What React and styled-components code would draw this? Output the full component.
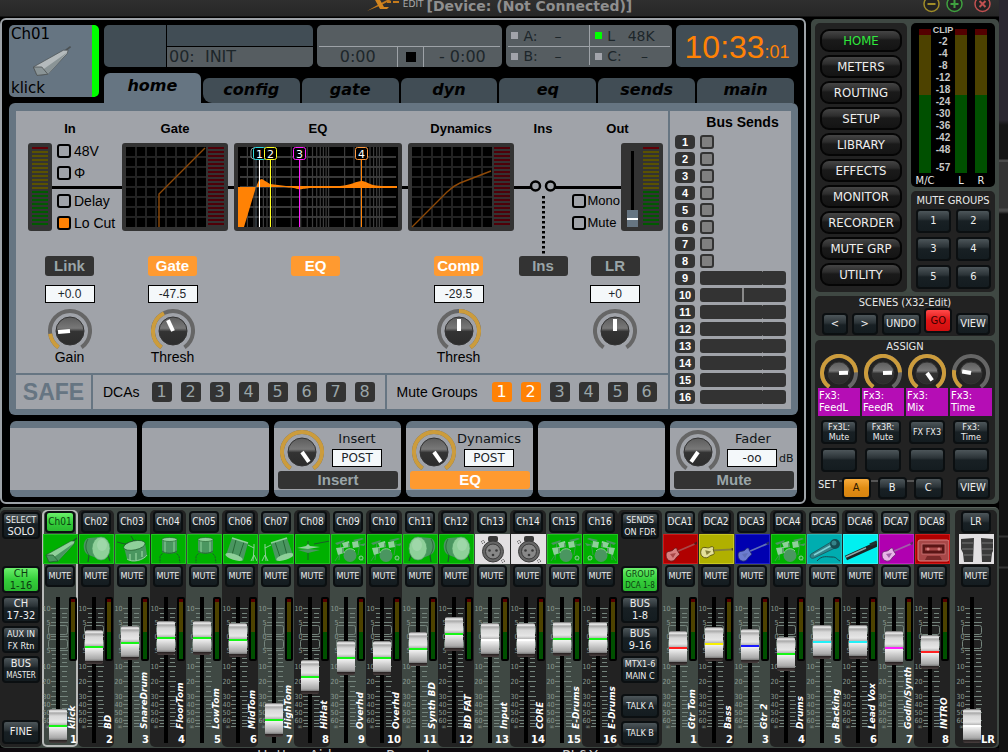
import React, { useState } from 'react';
import styled, { createGlobalStyle } from 'styled-components';

const sans = `"Liberation Sans", Arial, sans-serif`;
const dejavu = `"DejaVu Sans", Verdana, sans-serif`;
const narrow = `"DejaVu Sans Condensed", "DejaVu Sans", sans-serif`;

const GlobalStyle = createGlobalStyle`
  * { box-sizing: border-box; }
  body {
    margin: 0;
    background: #000;
    font-family: ${dejavu};
    overflow: hidden;
  }
  button, input { font-family: inherit; margin: 0; padding: 0; }
  button { cursor: pointer; }
  svg { display: block; flex: none; }
`;

/* ---------- window ---------- */

const Desktop = styled.div`
  display: grid;
  grid-template-columns: 1fr 9px;
  min-height: 100vh;
`;
const Edge = styled.div`
  background: linear-gradient(#2a2730 0 120px, #151515 125px 159px, #4a4a4a 160px 162px, #333 162px 208px, #4a4a4a 209px 211px, #111 214px 535px, #333 536px 537px, #131313 538px 566px, #333 567px 568px, #111 569px);
`;
const Window = styled.div`
  display: flex;
  flex-direction: column;
  min-width: 0;
`;
const TitleBar = styled.header`
  display: flex;
  justify-content: center;
  height: 18px;
  background: linear-gradient(#2f2f2f, #272727 16px, #000 17px);
  overflow: hidden;
`;
const TitleSide = styled.div`
  flex: 1;
  display: flex;
  justify-content: flex-end;
  gap: 6px;
  padding-right: 8px;
  svg:last-child { margin-left: 5px; }
`;
const AppName = styled.span`
  color: #aaa;
  font-size: 9px;
  line-height: 9px;
  margin: 0 3px 0 1px;
`;
const Title = styled.h1`
  margin: 0;
  color: #8f8f8f;
  font-size: 14px;
  font-weight: bold;
  line-height: 12px;
`;
const Main = styled.main`
  display: grid;
  grid-template-columns: 1fr 188px;
  gap: 5px;
`;
const Footer = styled.footer`
  display: flex;
  flex: 1;
  height: 4px;
  padding-left: 257px;
  gap: 38px;
  color: #c8c8c8;
  font-size: 14px;
  line-height: 15px;
  background: #0e0a0e;
  overflow: hidden;
  span { width: 91px; white-space: nowrap; }
  span:nth-child(2) { width: 138px; }
`;

/* ---------- console screen ---------- */

const Screen = styled.section`
  border: 2px solid #9da2a7;
  border-radius: 6px;
  padding: 5px 6px 5px 7px;
  background: #000;
  min-width: 0;
`;
const Top = styled.div`
  display: grid;
  grid-template-columns: 90px 1fr;
  gap: 5px;
  height: 78px;
`;
const ChannelTile = styled.div`
  display: flex;
  flex-direction: column;
  justify-content: space-between;
  height: 72px;
  padding: 0 2px;
  border-right: 7px solid #00ff00;
  border-radius: 5px;
  background: #667582;
  color: #000;
  font-size: 15px;
  line-height: 18px;
  svg { margin-left: 17px; }
`;
const TopRight = styled.div`
  display: flex;
  flex-direction: column;
  justify-content: space-between;
`;
const InfoRow = styled.div`
  display: grid;
  grid-template-columns: 209fr 186fr 166fr 122fr;
  gap: 4px;
  height: 42px;
  color: #1d262a;
  font-size: 16px;
  line-height: 20px;
`;
const SceneBox = styled.div`
  display: grid;
  grid-template-columns: 62px 1fr;
  grid-template-rows: 21px 21px;
  border-radius: 5px;
  background: #414d55;
  overflow: hidden;
`;
const SceneCell = styled.div`
  border-left: 1px solid #000;
  border-top: ${(p) => (p.$lower ? '1px solid #000' : 'none')};
  background: ${(p) => (p.$lower ? '#565d61' : 'transparent')};
  padding-left: 2px;
  white-space: pre;
`;
const SceneSide = styled.div`
  grid-row: span 2;
`;
const GreyBox = styled.div`
  display: grid;
  grid-template-rows: 21px 19px;
  padding: 0 2px 2px;
  border-radius: 5px;
  background: #565d61;
`;
const Split = styled.div`
  display: grid;
  grid-template-columns: ${(p) => p.$cols};
  border-top: ${(p) => (p.$line ? '1px solid #9da2a7' : 'none')};
  text-align: center;
  > * + * { border-left: 1px solid #9da2a7; }
`;
const StopMark = styled.div`
  display: grid;
  place-items: center;
  &::after { content: ''; width: 10px; height: 10px; background: #000; }
`;
const Sync = styled.div`
  display: flex;
  align-items: center;
  gap: 5px;
  padding-left: ${(p) => (p.$second ? 5 : 3)}px;
  font-size: 14px;
  line-height: 18px;
  &::before {
    content: '';
    width: 7px;
    height: 7px;
    background: ${(p) => (p.$on ? '#00ff00' : '#a2a4ab')};
  }
  b { font-weight: normal; flex: 1; text-align: center; padding-right: ${(p) => (p.$second ? 8 : 16)}px; }
`;
const Clock = styled.time`
  display: flex;
  align-items: baseline;
  justify-content: center;
  border-radius: 5px;
  background: #414d55;
  color: #ff8205;
  font: 32px/45px ${sans};
  height: 42px;
  small { font-size: 18px; }
`;
const Tabs = styled.nav`
  display: grid;
  grid-template-columns: repeat(7, 1fr);
  align-items: end;
  gap: 2px;
  padding-right: 4px;
`;
const Tab = styled.button`
  height: ${(p) => (p.$active ? 30 : 25)}px;
  padding-bottom: ${(p) => (p.$active ? 5 : 2)}px;
  border: 0;
  border-radius: 6px 6px 0 ${(p) => (p.$second ? '9px' : '0')};
  background: ${(p) => (p.$active ? '#667582' : '#414d55')};
  color: #000;
  font: italic bold 16px/20px ${dejavu};
`;
const Panel = styled.div`
  display: grid;
  grid-template-columns: 1fr 123px;
  padding: 8px 7px 6px;
  border-radius: 6px;
  background: #667582;
  > * { background: #a0a3a9; }
`;
const Home = styled.div`
  display: flex;
  flex-direction: column;
  height: 298px;
  min-width: 0;
`;
const Signal = styled.div`
  flex: 1;
  display: grid;
  grid-template-columns: minmax(0, 88fr) minmax(0, 106fr) minmax(0, 168fr) minmax(0, 106fr) minmax(0, 46fr) minmax(0, 91fr);
  grid-template-rows: 22px 88px 1fr;
  column-gap: 6px;
  padding: 10px 5px 0 12px;
`;
const SignalLine = styled.div`
  grid-area: 2 / 1 / 3 / -1;
  height: 3px;
  align-self: center;
  background: #000;
`;
const Heading = styled.h2`
  grid-area: 1 / ${(p) => p.$col};
  margin: 0;
  text-align: center;
  font: bold 13px/16px ${sans};
  padding-right: ${(p) => (p.$col === 1 ? 4 : 0)}px;
`;
const Stage = styled.div`
  grid-area: 2 / ${(p) => p.$col};
  display: flex;
  justify-content: ${(p) => (p.$col === 6 ? 'flex-end' : 'flex-start')};
  gap: ${(p) => (p.$col === 6 ? 1 : 5)}px;
  min-width: 0;
  z-index: 1;
`;
const Checks = styled.div`
  display: flex;
  flex-direction: column;
  justify-content: ${(p) => (p.$low ? 'flex-end' : 'space-between')};
  gap: 6px;
  > div { display: flex; flex-direction: column; gap: 6px; }
`;
const Check = styled.label`
  display: flex;
  align-items: center;
  gap: ${(p) => (p.$small ? 1 : 3)}px;
  height: 16px;
  font: ${(p) => (p.$small ? 13 : 14)}px/16px ${sans};
  white-space: nowrap;
  input {
    appearance: none;
    width: 14px;
    height: 14px;
    border: 2px solid #000;
    border-radius: 3px;
  }
  input:checked { background: #ff8205; }
`;
const Controls = styled.div`
  grid-area: 3 / ${(p) => p.$col};
  display: flex;
  flex-direction: column;
  align-items: center;
  padding: 25px ${(p) => (p.$col === 5 ? 0 : 5)}px 0 0;
  font: 14px/16px ${sans};
`;
const FlatButton = styled.button`
  width: ${(p) => (p.$wide ? '100%' : '49px')};
  height: ${(p) => (p.$wide ? 18 : 20)}px;
  border: 0;
  border-radius: 3px;
  background: ${(p) => (p.$on ? '#ff9a30' : '#333')};
  color: ${(p) => (p.$on ? '#fff' : '#9aa5a8')};
  font: bold 15px/18px ${sans};
`;
const Value = styled.input`
  width: 50px;
  height: 18px;
  border: 1px solid #000;
  background: #f4f8fa;
  color: #1d262a;
  font-size: 12px;
  text-align: center;
`;
const ControlValue = styled(Value)`
  margin: 9px 0 6px;
`;
const Safe = styled.div`
  display: flex;
  height: 36px;
  border-top: 2px solid #667582;
  font: 14px/34px ${sans};
  > div { display: flex; align-items: center; }
  > div + div { border-left: 2px solid #667582; padding-left: 10px; }
`;
const SafeLabel = styled.div`
  width: 75px;
  justify-content: center;
  color: #667582;
  font: bold 23px/34px ${sans};
`;
const Numbers = styled.div`
  display: flex;
  gap: 9px;
  padding: 0 10px 0 ${(p) => p.$left}px;
`;
const Num = styled.button`
  width: 20px;
  height: 20px;
  border: 0;
  border-radius: 3px;
  background: ${(p) => (p.$on ? '#ff8205' : '#333')};
  color: ${(p) => (p.$on ? '#fff' : '#9aa5a8')};
  font: 16px/20px ${dejavu};
`;
const Sends = styled.div`
  border-left: 2px solid #667582;
  padding: 3px 5px 0 5px;
`;
const SendsTitle = styled.h2`
  margin: 0 0 4px;
  padding-left: 24px;
  text-align: center;
  font: bold 14px/17px ${sans};
`;
const SendRow = styled.div`
  display: grid;
  grid-template-columns: 20px 1fr;
  gap: 5px;
  height: 14px;
  margin-bottom: 3px;
`;
const SendNo = styled.span`
  border-radius: 4px;
  background: #333;
  color: #fff;
  text-align: center;
  font: bold 11px/14px ${sans};
`;
const SendTap = styled.button`
  width: 14px;
  height: 14px;
  border: 2px solid #333;
  border-radius: 3px;
  background: #808080;
`;
const SendBar = styled.div`
  border-radius: 3px;
  background: ${(p) =>
    p.$pan
      ? 'linear-gradient(#8a8a8a, #8a8a8a) 50% 0 / 2px 100% no-repeat #333'
      : 'linear-gradient(#777 0 1px, transparent 1px 13px, #777 13px) 73% 0 / 1px 100% no-repeat #333'};
`;
const Cards = styled.div`
  display: grid;
  grid-template-columns: repeat(6, minmax(0, 1fr));
  gap: 5px;
  padding: 6px 1px 0;
`;
const Card = styled.div`
  display: flex;
  flex-direction: column;
  justify-content: space-between;
  height: 76px;
  padding: 2px 3px 1px 4px;
  border: solid #667582;
  border-width: 7px 0;
  border-radius: 6px;
  background: #a0a3a9;
`;
const CardTop = styled.div`
  display: flex;
  padding-left: 2px;
  height: 40px;
`;
const CardText = styled.label`
  flex: 1;
  min-width: 0;
  display: flex;
  flex-direction: column;
  align-items: center;
  gap: 2px;
  padding-right: 8px;
  font-size: 13px;
  line-height: 17px;
  color: #101518;
`;
const WithUnit = styled.span`
  display: flex;
  align-items: center;
  align-self: flex-start;
  gap: 2px;
  padding-left: 7px;
  font-size: 11px;
`;

/* ---------- right hand panel ---------- */

const Side = styled.aside`
  display: flex;
  flex-direction: column;
  gap: 4px;
  margin-top: 1px;
  padding: 4px;
  border-radius: 5px;
  background: #3f4843;
  color: #e8e8e8;
  font-family: ${narrow};
`;
const SideTop = styled.div`
  display: grid;
  grid-template-columns: 1fr 84px;
  gap: 4px;
`;
const Box = styled.div`
  border-radius: 5px;
  background: #222;
  padding: ${(p) => p.$pad || '0'};
`;
const Nav = styled(Box)`
  display: flex;
  flex-direction: column;
  gap: 3px;
  padding: 6px 5px;
  height: 269px;
`;
const NavButton = styled.button`
  height: 23px;
  border: 2px solid #050505;
  border-radius: 9px;
  background: linear-gradient(#454545, #2c2c2c 7px, #1a1a1a 9px, #141414);
  color: ${(p) => (p.$on ? '#2fe83c' : '#eee')};
  font: 13px/18px ${narrow};
`;
const RightCol = styled.div`
  display: flex;
  flex-direction: column;
  gap: 4px;
`;
const MeterBox = styled(Box)`
  display: grid;
  grid-template-columns: 12px 1fr 12px 12px;
  column-gap: 8px;
  height: 164px;
  padding: 6px 8px 0;
  background: #000;
  font-size: 11px;
  line-height: 13px;
  text-align: center;
`;
const MainMeter = styled.div`
  height: 144px;
  background: linear-gradient(#540000 0 6px, #4d4200 6px 66px, #005000 66px);
`;
const MeterLabel = styled.span`
  display: flex;
  justify-content: center;
  white-space: nowrap;
`;
const DbScale = styled.div`
  height: 144px;
  margin: -5px -8px 0;
  color: #c8c8c8;
  font: bold 10px/12px ${sans};
  p { margin: 0; }
  p:first-child { font-size: 9px; }
  p:last-child { margin-top: 6px; }
`;
const BoxTitle = styled.h3`
  margin: 0;
  font: 11px/14px ${narrow};
  text-align: center;
  white-space: nowrap;
`;
const MuteGrid = styled.div`
  display: grid;
  grid-template-columns: 1fr 1fr;
  gap: 4px 5px;
  padding: 1px 4px 0 5px;
`;
const keyLook = {
  dark: ['linear-gradient(#4d565a, #2b3337 8px, #182024 10px, #141c20)', '#eee'],
  green: ['linear-gradient(#6cf06c, #35cf3b 50%, #2ab830)', '#0b3d10'],
  red: ['linear-gradient(#ff4a4a, #e01414 50%, #d01010)', '#3a0000'],
  amber: ['linear-gradient(#f8ac3c, #e08c14 50%, #d68410)', '#2b1800'],
};
const Key = styled.button`
  width: ${(p) => (p.$w ? p.$w + 'px' : 'auto')};
  height: ${(p) => p.$h || 24}px;
  border: 2px solid #0b0f11;
  border-radius: 4px;
  background: ${(p) => keyLook[p.$look || 'dark'][0]};
  color: ${(p) => keyLook[p.$look || 'dark'][1]};
  font: ${(p) => p.$size || 11}px/${(p) => p.$lh || 12}px ${narrow};
  white-space: nowrap;
  display: flex;
  flex-direction: column;
  align-items: center;
  justify-content: center;
  flex: none;
`;
const SceneKeys = styled.div`
  display: flex;
  align-items: flex-end;
  justify-content: space-between;
  padding: 0 5px 0 7px;
  height: 25px;
  > :nth-child(4) { align-self: flex-start; margin-top: -2px; }
`;
const Assign = styled(Box)`
  height: 160px;
`;
const AssignGrid = styled.div`
  display: grid;
  grid-template-columns: repeat(4, 1fr);
  justify-items: center;
  gap: 4px 2px;
  padding: 0 3px;
`;
const AssignCell = styled.div`
  display: flex;
  flex-direction: column;
  align-items: center;
  width: 100%;
`;
const FxName = styled.div`
  width: 100%;
  height: 28px;
  padding: 2px 0 0 1px;
  background: #b50db5;
  color: #fff;
  font-size: 11px;
  line-height: 12px;
  white-space: pre-line;
`;
const SetRow = styled.div`
  display: flex;
  align-items: center;
  gap: 7px;
  padding: 5px 5px 0 3px;
  font-size: 11px;
  background: linear-gradient(#555, #555) 24px 8px / 80px 2px no-repeat;
  > :last-child { margin-left: auto; }
  > span { margin-top: -7px; margin-right: -2px; }
`;

/* ---------- mixer ---------- */

const Mixer = styled.section`
  display: grid;
  grid-template-columns: 42px 16fr 44px 8fr 5px 42px;
  margin-top: 3px;
  padding: 2px 2px 2px 0;
  border-top: 1px solid #59625c;
  border-radius: 5px;
  background: #3f4843;
  height: 241px;
`;
const Bank = styled.div`
  display: flex;
  flex-direction: column;
  gap: 3px;
  align-items: center;
  padding: 2px 2px;
  border-radius: 5px;
  background: #222;
`;
const Spacer = styled.div`
  height: ${(p) => p.$h}px;
  flex: none;
`;
const Strips = styled.div`
  display: grid;
  grid-template-columns: repeat(${(p) => p.$n}, 1fr);
`;
const Strip = styled.div`
  display: flex;
  flex-direction: column;
  align-items: center;
  gap: 1px;
  min-width: 0;
  padding-top: 1px;
  border-radius: 5px;
  background: ${(p) => (p.$dark ? '#222' : '#3f4843')};
  box-shadow: ${(p) => (p.$selected ? 'inset 0 0 0 2px #b8bab9' : 'none')};
`;
const IconTile = styled.div`
  display: grid;
  place-items: center;
  width: 35px;
  height: 30px;
  border: 1px solid ${(p) => p.$edge};
  background: ${(p) => p.$bg};
  overflow: hidden;
`;
const FaderArea = styled.div`
  display: grid;
  grid-template-columns: 26px 1fr;
  width: ${(p) => (p.$wide ? 40 : 36)}px;
  height: 148px;
  margin-top: 9px;
  > svg, > input { grid-area: 1 / 1; }
`;
const Fader = styled.input`
  appearance: none;
  writing-mode: vertical-lr;
  direction: rtl;
  width: 18px;
  height: 146px;
  margin-left: 7px;
  z-index: 1;
  border-radius: 2px;
  background: linear-gradient(#000, #000) 50% 0 / 4px 100% no-repeat;
  &::-webkit-slider-thumb {
    appearance: none;
    width: 18px;
    height: 34px;
    border-radius: 2px;
    background: linear-gradient(#666 0, #f4f4f4 2px, #a9a9a9 4px, #d8d8d8 7px, #e6e6e6 13px, #b4b4b4 16px,
      ${(p) => p.$mark} 16px, ${(p) => p.$mark} 18px, #f2f2f2 18px, #d0d0d0 23px, #a8a8a8 29px, #777 31px, #262020 31px, #4a4040 34px);
  }
`;
const FaderSide = styled.div`
  display: flex;
  flex-direction: column;
  align-items: flex-end;
  min-width: 0;
  padding-right: 1px;
  color: #fff;
`;
const StripMeter = styled.div`
  width: 8px;
  height: 64px;
  border: 2px solid #000;
  border-radius: 2px;
  visibility: ${(p) => (p.$off ? 'hidden' : 'visible')};
  background: linear-gradient(#540000 0 3px, #4d4200 3px 33px, #005000 33px);
  flex: none;
`;
const Name = styled.span`
  flex: 1;
  min-height: 0;
  writing-mode: vertical-rl;
  transform: rotate(180deg);
  margin-right: -1px;
  font: italic bold 9px/11px ${dejavu};
  white-space: nowrap;
  margin-bottom: 6px;
  display: flex;
`;
const Index = styled.span`
  font: bold 10px/10px ${dejavu};
  z-index: 2;
`;

/* ---------- drawings ---------- */

const polar = (c, r, deg) => {
  const a = ((deg - 90) * Math.PI) / 180;
  return `${(c + r * Math.cos(a)).toFixed(2)} ${(c + r * Math.sin(a)).toFixed(2)}`;
};
const arc = (c, r, from, to) =>
  `M${polar(c, r, from)}A${r} ${r} 0 ${to - from > 180 ? 1 : 0} 1 ${polar(c, r, to)}`;

const Knob = ({ size = 44, from = -145, to = -145, angle, ring = 4, label }) => {
  const c = size / 2;
  const r = c - ring / 2;
  const ball = size > 40 ? 14 : 11;
  return (
    <svg width={size} height={size - 4} role="img" aria-label={label}>
      <defs>
        <linearGradient id="ball" x1="0" y1="0" x2="0" y2="1">
          <stop offset="0" stopColor="#5c5c5c" />
          <stop offset=".4" stopColor="#787878" />
          <stop offset=".52" stopColor="#333" />
          <stop offset="1" stopColor="#2c2c2c" />
        </linearGradient>
      </defs>
      <path d={arc(c, r, -145, 145)} fill="none" stroke="#666" strokeWidth={ring} />
      {to > from && <path d={arc(c, r, from, to)} fill="none" stroke="#cc9c3c" strokeWidth={ring} />}
      <circle cx={c} cy={c} r={ball} fill="url(#ball)" stroke="#333" strokeWidth="1" />
      <path d={`M${c} ${c}L${polar(c, ball - 2, angle)}`} stroke="#fff" strokeWidth="4" />
    </svg>
  );
};

const LedBars = ({ x }) =>
  [...Array(20)].map((_, i) => (
    <rect key={i} x={x} y={4 + i * 4} width="16" height="2" fill={i === 0 ? '#600007' : i < 11 ? '#5a5200' : '#005a00'} />
  ));

const LedMeter = () => (
  <svg width="24" height="88">
    <rect width="24" height="88" rx="3" fill="#333" />
    <LedBars x={4} />
  </svg>
);

const Curve = ({ d }) => (
  <svg width="100%" height="88" viewBox="0 0 106 88" preserveAspectRatio="none">
    <rect width="106" height="88" rx="3" fill="#333" />
    <rect x="4" y="4" width="80" height="80" fill="#000" />
    {[14, 24, 34, 44, 54, 64, 74].map((v) => (
      <path key={v} d={`M${v} 4V84M4 ${v}H84`} stroke="#222" strokeWidth="2" />
    ))}
    {[...Array(20)].map((_, i) => (
      <rect key={i} x="86" y={4 + i * 4} width="16" height="2" fill="#4f0008" />
    ))}
    <path d={d} fill="none" stroke="#8f4a08" strokeWidth="1.4" />
  </svg>
);

const freqs = [30, 40, 50, 60, 70, 80, 90, 100, 200, 300, 400, 500, 600, 700, 800, 900, 1000, 2000, 3000, 4000, 5000, 6000, 7000, 8000, 9000, 10000];
const bands = [[25, '#2fd8e0', '#fff'], [36, '#ffff20', '#ffff20'], [65, '#ff20ff', '#ff20ff'], [127, '#ff9a40', '#ff8205']];

const EqGraph = () => (
  <svg width="100%" height="88" viewBox="0 0 168 88" preserveAspectRatio="none">
    <rect width="168" height="88" rx="3" fill="#333" />
    <rect x="4" y="4" width="160" height="80" fill="#000" />
    {[14, 24, 34, 44, 54, 64, 74].map((y) => (
      <path key={y} d={`M6 ${y}H162`} stroke="#383838" strokeWidth="2" />
    ))}
    {freqs.map((f) => (
      <path key={f} d={`M${(4 + Math.log10(f / 20) * 53.3).toFixed(1)} 4V84`} stroke="#3c3c3c" strokeWidth="1.2" />
    ))}
    <path d="M4 44H22L10 84H4Z" fill="#ff8205" />
    <path d="M22 44L25 37L28 36L36 41L52 43H106C118 42 122 38 128 38C132 38 136 43 148 43H163V45H78C70 45 68 47 64 46C56 44 50 44 22 44Z" fill="#ff8205" />
    <path d="M22 16V84" stroke="#55626c" />
    <rect x="17" y="5" width="8" height="11" rx="3" fill="#000" stroke="#8a949b" />
    {bands.map(([x, box, line], i) => (
      <g key={x}>
        <path d={`M${x + 0.5} 15V84`} stroke={line} />
        <rect x={x - 5.5} y="4.500" width="12" height="12" rx="2" fill="#000" stroke={box} />
        <text x={x + 0.5} y="14.500" textAnchor="middle" fill="#fff" fontSize="11" fontFamily="DejaVu Sans">{i + 1}</text>
      </g>
    ))}
  </svg>
);

const InsertPoint = () => (
  <svg width="46" height="88" overflow="visible">
    <rect x="16" y="38" width="14" height="12" fill="#a0a3a9" />
    <circle cx="15.500" cy="43" r="4.500" fill="#a0a3a9" stroke="#000" strokeWidth="2.500" />
    <circle cx="30.500" cy="43" r="4.500" fill="#a0a3a9" stroke="#000" strokeWidth="2.500" />
    <path d="M23.500 53V111" stroke="#000" strokeWidth="3" strokeDasharray="2.500 2.500" />
  </svg>
);

const OutFader = () => (
  <svg width="42" height="88">
    <rect width="42" height="88" rx="3" fill="#333" />
    <rect x="10" y="8" width="3" height="60" fill="#000" />
    <rect x="6" y="67" width="11" height="17" fill="#667582" />
    <rect x="6" y="75" width="11" height="2" fill="#fff" />
    <LedBars x={22} />
  </svg>
);

const marks = [[11, '10'], [25, '5'], [39, '0'], [53, '5'], [69, '10'], [84, '20'], [99, '30'], [107, '40'], [115, '50'], [123, '60'], [129, '∞']];
const minor = [16, 20, 57, 61, 65, 74, 79, 89, 94, 103, 111, 119, 126];

const Scale = () => (
  <svg width="26" height="146">
    {marks.map(([y, t], i) => (
      <g key={i}>
        <path d={i < 7 ? `M9 ${y + 0.5}H26` : `M9 ${y + 0.5}H14M20 ${y + 0.5}H26`} stroke="#74847c" />
        <text x="8.500" y={y + 3} textAnchor="end" fontSize="7" fontFamily="DejaVu Sans Condensed" fill="#8d9b94">{t}</text>
      </g>
    ))}
    {minor.map((y) => (
      <path key={y} d={`M10 ${y + 0.5}H14M20 ${y + 0.5}H25`} stroke="#74847c" />
    ))}
    <rect x="6.500" y="28.500" width="19" height="9" rx="2" fill="none" stroke="#74847c" />
    <rect x="6.500" y="42.500" width="19" height="9" rx="2" fill="none" stroke="#74847c" />
  </svg>
);

const Guitar = ({ l, m, d }) => (
  <>
    <path d="M12 17L33 8" stroke={m} strokeWidth="1.800" />
    <path d="M30 8L34 6L34 9L31 10Z" fill={d} />
    <path d="M2 20C2 15 7 17 9 15C11 12 14 13 13 15L15 18C17 20 13 21 12 23C10 28 2 27 2 20Z" fill={l} stroke={d} strokeWidth=".8" />
    <path d="M6 19L12 18L9 23Z" fill={m} />
  </>
);
const glyphs = {
  bell: ({ l, m, d }) => (
    <>
      <path d="M29 6L33 3" stroke={d} strokeWidth="1.500" />
      <path d="M2 20L27 6L31 6L30 9L14 26L5 27Z" fill={l} stroke={d} strokeWidth=".6" />
      <path d="M10 22L30 8L14 26Z" fill={m} />
      <path d="M2 20L9 20L14 26L5 27Z" fill={m} stroke={d} strokeWidth=".7" />
    </>
  ),
  kick: ({ l, m, d }) => (
    <>
      <path d="M9 20L8 27M28 20L30 26" stroke={d} strokeWidth="1.200" />
      <path d="M9 3C2 4 2 18 9 20L21 25L21 2Z" fill={m} />
      <path d="M8 4C5 9 5 15 9 20" stroke={d} strokeWidth=".7" fill="none" />
      <ellipse cx="21" cy="13.500" rx="9" ry="11.500" fill={l} stroke={m} strokeWidth=".7" />
      <ellipse cx="22" cy="10" rx="5" ry="6" fill="#fff" opacity=".15" />
    </>
  ),
  snare: ({ l, m, d }) => (
    <>
      <path d="M1 7L9 9L20 5M18 6L15 1" stroke={d} strokeWidth="1" fill="none" />
      <path d="M8 12L11 24C16 29 28 26 31 20L29 8Z" fill={m} />
      <ellipse cx="18.500" cy="10.500" rx="11" ry="4.500" fill={l} stroke={d} strokeWidth=".7" transform="rotate(-12 18 11)" />
      <path d="M11 24C16 28 28 25 31 20" stroke={l} fill="none" />
      <path d="M14 19V25M20 18V25M26 16V22" stroke={l} strokeWidth="1.300" />
    </>
  ),
  tom: ({ l, m, d }) => (
    <>
      <path d="M12 17L8 21L8 28M23 17L27 21L28 28" stroke={d} strokeWidth="1" strokeDasharray="2 1" fill="none" />
      <path d="M10 4V17C14 19 21 19 25 17V4Z" fill={m} />
      <path d="M13 6V18M22 6V17" stroke={l} strokeWidth="1.500" opacity=".7" />
      <path d="M10 16C14 19 21 19 25 16" stroke={d} fill="none" strokeWidth=".8" />
      <ellipse cx="17.500" cy="4.500" rx="7.500" ry="2" fill={l} stroke={d} strokeWidth=".6" />
    </>
  ),
  tilt: ({ l, m, d }) => (
    <>
      <path d="M24 10L30 13L29 26M30 13V9M30 20L33 26M30 20L27 26" stroke={l} fill="none" strokeWidth="1" />
      <path d="M8 3L24 8L19 26L2 20Z" fill={m} />
      <path d="M12 5L8 20M20 7L15 22" stroke={d} strokeWidth=".8" />
      <path d="M8 3L24 8" stroke={l} strokeWidth="1.500" />
      <ellipse cx="10" cy="22" rx="9" ry="3" fill={l} transform="rotate(18 10 22)" />
    </>
  ),
  hihat: ({ l, m, d }) => (
    <>
      <path d="M12 6V25M18 9L34 6" stroke={d} strokeWidth="1" />
      <path d="M1 13L10 11L12 9L14 11L24 12L12 14Z" fill={l} />
      <path d="M2 15L12 14L24 15L12 18Z" fill={m} />
    </>
  ),
  kit: ({ l, m, d }) => (
    <>
      <path d="M9 7L7 25M28 7L26 20M7 20L3 26M27 21L31 26" stroke={m} strokeWidth=".8" fill="none" />
      <path d="M3 8L13 5L12 7L5 10ZM21 5L30 3L32 4L24 7ZM26 10L34 8L32 11Z" fill={m} />
      <path d="M10 8L17 6L18 12L12 13Z" fill={l} />
      <path d="M20 7L26 6L27 12L21 13Z" fill={l} />
      <path d="M4 13L12 12L12 18L6 20Z" fill={l} />
      <path d="M17 8V12M11 13V18" stroke={d} strokeWidth=".8" />
      <circle cx="18" cy="20.500" r="6.500" fill={m} />
      <path d="M12 18A6.500 6.500 0 0 1 23 16" stroke={l} fill="none" />
      <circle cx="29" cy="23" r="2" fill="none" stroke={l} />
    </>
  ),
  xlr: ({ m, d }) => (
    <>
      <rect x="12" y="1" width="10" height="6" rx="2" fill={d} />
      <circle cx="17" cy="16.500" r="10.500" fill={m} stroke={d} />
      <circle cx="17" cy="16.500" r="7.500" fill="#888" stroke={d} />
      <circle cx="13.500" cy="15.500" r="1.300" fill={d} />
      <circle cx="20.500" cy="15.500" r="1.300" fill={d} />
      <circle cx="17" cy="20" r="1.300" fill={d} />
      <circle cx="7" cy="7" r="1.500" fill="none" stroke={d} strokeDasharray="1 1" />
      <circle cx="27" cy="26" r="1.500" fill="none" stroke={d} strokeDasharray="1 1" />
    </>
  ),
  guitar: Guitar,
  bass: (tone) => (
    <g transform="rotate(20 16 15)">
      <Guitar {...tone} />
    </g>
  ),
  mic: ({ l, m, d }) => (
    <>
      <path d="M9 26C14 20 19 22 24 22S28 24 32 26" stroke={d} fill="none" />
      <path d="M3 19L23 7L27 13L6 23C3 24 1 22 3 19Z" fill={m} stroke={d} strokeWidth=".7" />
      <path d="M6 20L24 10" stroke={l} strokeWidth="1.500" />
      <circle cx="27" cy="9" r="5" fill={d} />
      <circle cx="26" cy="8" r="2.500" fill={m} />
    </>
  ),
  shotgun: ({ l, d }) => (
    <>
      <path d="M2 23L33 9" stroke="#1a2424" strokeWidth="5" />
      <path d="M2 22L22 13" stroke={l} strokeWidth="1.500" />
      <path d="M26 10L33 7" stroke={d} strokeWidth="3" />
    </>
  ),
  tape: ({ l, m, d }) => (
    <>
      <rect x="2" y="5" width="31" height="21" rx="2" fill={m} stroke={l} />
      <rect x="6" y="9" width="23" height="10" fill={d} stroke={l} strokeWidth=".7" />
      <path d="M9 14H26" stroke={m} strokeWidth="3" />
      <circle cx="12" cy="14" r="1.500" fill={l} />
      <circle cx="23" cy="14" r="1.500" fill={l} />
      <path d="M9 25L11 21H24L26 25Z" fill={d} opacity=".6" />
    </>
  ),
  speakers: ({ d }) => (
    <>
      <path d="M1 4L14 3L13 27H4L3 18L1 14ZM34 4L21 3L22 27H31L32 18L34 14Z" fill={d} />
      <path d="M2 8H13M2 14H13M4 20H13M22 8H33M22 14H33M22 20H31" stroke="#777" />
    </>
  ),
};

const palettes = {
  green: { bg: '#00b000', edge: '#20c420', l: '#8fd09a', m: '#4a9660', d: '#1c5a2a', mark: '#16f516' },
  white: { bg: '#e2e0e2', edge: '#e2e0e2', l: '#aaa', m: '#666', d: '#3a3a3a', mark: '#fff' },
  red: { bg: '#b00000', edge: '#d01818', l: '#d88080', m: '#a84848', d: '#5a1515', mark: '#ff2020' },
  yellow: { bg: '#b0b000', edge: '#c8c820', l: '#e4e09a', m: '#85803a', d: '#55500f', mark: '#f8f000' },
  blue: { bg: '#0000b0', edge: '#2020c8', l: '#6c7cd0', m: '#6070b8', d: '#20286a', mark: '#1a1aff' },
  teal: { bg: '#00adb0', edge: '#20bcc0', l: '#80d4d8', m: '#35848a', d: '#154c52', mark: '#20f0f8' },
  cyan: { bg: '#00f0f0', edge: '#30f4f4', l: '#90a8a8', m: '#445555', d: '#223333', mark: '#20f0f8' },
  purple: { bg: '#b000b0', edge: '#c420c4', l: '#e8b4e8', m: '#a060a8', d: '#602468', mark: '#ff20ff' },
};
const metal = { l: '#b4babc', m: '#8a9496', d: '#4c5254' };

const Glyph = ({ kind, tone, flip, w = 35, h = 30 }) => {
  const Shape = glyphs[kind];
  return (
    <svg width={w} height={h} viewBox="0 0 35 30">
      <g transform={flip ? 'translate(35 0) scale(-1 1)' : undefined}>
        <Shape {...tone} />
      </g>
    </svg>
  );
};

const Logo = () => (
  <svg width="35" height="12" viewBox="0 0 35 12">
    <path d="M0 11C8 6 16 2 26 -3L29 -3C20 3 10 7 0 11Z" fill="#c47a1c" />
    <path d="M7 -2H12L17 7H22L20 9H13Z" fill="#d4861f" />
    <path d="M20 2H24M26 2H32" stroke="#c47a1c" strokeWidth="2" />
  </svg>
);
const WinButton = ({ color, d }) => (
  <svg width="17" height="13" viewBox="0 0 17 13">
    <circle cx="8.500" cy="4" r="7.500" fill="#222" stroke={color} strokeWidth="1.500" />
    <path d={d} stroke={color} strokeWidth="2" />
  </svg>
);

/* ---------- data ---------- */

const channels = [
  ['klick', 'bell', 'green', 0], ['BD', 'kick', 'green', 79], ['SnareDrum', 'snare', 'green', 83], ['FloorTom', 'tom', 'green', 88],
  ['LowTom', 'tom', 'green', 88], ['MidTom', 'tilt', 'green', 86], ['HighTom', 'tilt', 'green', 6, true], ['HiHat', 'hihat', 'green', 49],
  ['Overhd', 'kit', 'green', 68], ['Overhd', 'kit', 'green', 68], ['Synth BD', 'kick', 'green', 77, true], ['BD FAT', 'kick', 'green', 92],
  ['Input', 'xlr', 'white', 86], ['CORE', 'xlr', 'white', 86], ['E-Drums', 'kit', 'green', 87], ['E-Drums', 'kit', 'green', 87, true],
];
const dcas = [
  ['Gtr Tom', 'guitar', 'red', 78], ['Bass', 'bass', 'yellow', 82], ['Gtr 2', 'guitar', 'blue', 80], ['Drums', 'kit', 'green', 72],
  ['Backing', 'mic', 'teal', 84], ['Lead Vox', 'shotgun', 'cyan', 84], ['Godin/Synth', 'guitar', 'purple', 78], ['INTRO', 'tape', 'red', 74],
];
const views = ['HOME', 'METERS', 'ROUTING', 'SETUP', 'LIBRARY', 'EFFECTS', 'MONITOR', 'RECORDER', 'MUTE GRP', 'UTILITY'];
const tabs = ['home', 'config', 'gate', 'dyn', 'eq', 'sends', 'main'];

const Channel = ({ title, data, index, dark, selected, main }) => {
  const [name, kind, color, start, flip] = data;
  const [level, setLevel] = useState(start);
  const tone = palettes[color];
  return (
    <Strip $dark={dark} $selected={selected}>
      <Key $w={30} $h={22} $size={10} $look={selected ? 'green' : 'dark'}>{title}</Key>
      <IconTile $bg={tone.bg} $edge={tone.edge}>
        <Glyph kind={kind} tone={tone} flip={flip} />
      </IconTile>
      <Key $w={30} $h={22} $size={9}>MUTE</Key>
      <FaderArea $wide={main}>
        <Scale />
        <Fader type="range" min="0" max="112" value={level} aria-label={`${title} level`} $mark={tone.mark} onChange={(e) => setLevel(Number(e.target.value))} />
        <FaderSide>
          <StripMeter $off={main} />
          <Name>{name}</Name>
          <Index>{index}</Index>
        </FaderSide>
      </FaderArea>
    </Strip>
  );
};

const Line = styled.span`
  font-size: ${(p) => p.$size}px;
`;
const BankKey = ({ top, bottom, sizes = [11, 11], look, h = 27 }) => (
  <Key $w={38} $h={h} $look={look}>
    <Line $size={sizes[0]}>{top}</Line>
    {bottom && <Line $size={sizes[1]}>{bottom}</Line>}
  </Key>
);

const ConsoleScreen = () => {
  const [tab, setTab] = useState('home');
  return (
    <Screen>
      <Top>
        <ChannelTile>
          <span>Ch01</span>
          <Glyph kind="bell" tone={metal} w={48} h={36} />
          <span>klick</span>
        </ChannelTile>
        <TopRight>
          <InfoRow>
            <SceneBox>
              <SceneSide />
              <SceneCell />
              <SceneCell $lower>00:  INIT</SceneCell>
            </SceneBox>
            <GreyBox>
              <div />
              <Split $line $cols="79fr 27fr 78fr">
                <span>0:00</span>
                <StopMark />
                <span>- 0:00</span>
              </Split>
            </GreyBox>
            <GreyBox>
              <Split $cols="1fr 1fr">
                <Sync>A: <b>–</b></Sync>
                <Sync $second $on>L <b>48K</b></Sync>
              </Split>
              <Split $line $cols="1fr 1fr">
                <Sync>B: <b>–</b></Sync>
                <Sync $second>C: <b>–</b></Sync>
              </Split>
            </GreyBox>
            <Clock>10:33<small>:01</small></Clock>
          </InfoRow>
          <Tabs>
            {tabs.map((t, i) => (
              <Tab key={t} $active={t === tab} $second={i === 1} onClick={() => setTab(t)}>{t}</Tab>
            ))}
          </Tabs>
        </TopRight>
      </Top>
      <Panel>
        <Home>
          <Signal>
            <SignalLine />
            {['In', 'Gate', 'EQ', 'Dynamics', 'Ins', 'Out'].map((h, i) => (
              <Heading key={h} $col={i + 1}>{h}</Heading>
            ))}
            <Stage $col={1}>
              <LedMeter />
              <Checks>
                <div>
                  <Check><input type="checkbox" />48V</Check>
                  <Check><input type="checkbox" />Φ</Check>
                </div>
                <div>
                  <Check><input type="checkbox" />Delay</Check>
                  <Check><input type="checkbox" defaultChecked />Lo Cut</Check>
                </div>
              </Checks>
            </Stage>
            <Stage $col={2}><Curve d="M37 84V51L83 5" /></Stage>
            <Stage $col={3}><EqGraph /></Stage>
            <Stage $col={4}><Curve d="M4 84L39 49Q45 43 52 40L83 28" /></Stage>
            <Stage $col={5}><InsertPoint /></Stage>
            <Stage $col={6}>
              <Checks $low>
                <Check $small><input type="checkbox" />Mono</Check>
                <Check $small><input type="checkbox" />Mute</Check>
              </Checks>
              <OutFader />
            </Stage>
            <Controls $col={1}>
              <FlatButton>Link</FlatButton>
              <ControlValue aria-label="Gain" defaultValue="+0.0" />
              <Knob angle={-95} to={-98} label="Gain" />
              Gain
            </Controls>
            <Controls $col={2}>
              <FlatButton $on>Gate</FlatButton>
              <ControlValue aria-label="Gate threshold" defaultValue="-47.5" />
              <Knob angle={-25} to={-27} label="Gate threshold" />
              Thresh
            </Controls>
            <Controls $col={3}>
              <FlatButton $on>EQ</FlatButton>
            </Controls>
            <Controls $col={4}>
              <FlatButton $on>Comp</FlatButton>
              <ControlValue aria-label="Compressor threshold" defaultValue="-29.5" />
              <Knob angle={0} from={0} to={145} label="Compressor threshold" />
              Thresh
            </Controls>
            <Controls $col={5}>
              <FlatButton>Ins</FlatButton>
            </Controls>
            <Controls $col={6}>
              <FlatButton>LR</FlatButton>
              <ControlValue aria-label="Pan" defaultValue="+0" />
              <Knob angle={0} label="Pan" />
            </Controls>
          </Signal>
          <Safe>
            <SafeLabel>SAFE</SafeLabel>
            <div>
              DCAs
              <Numbers $left={12}>
                {[1, 2, 3, 4, 5, 6, 7, 8].map((n) => <Num key={n}>{n}</Num>)}
              </Numbers>
            </div>
            <div>
              Mute Groups
              <Numbers $left={14}>
                {[1, 2, 3, 4, 5, 6].map((n) => <Num key={n} $on={n < 3}>{n}</Num>)}
              </Numbers>
            </div>
          </Safe>
        </Home>
        <Sends>
          <SendsTitle>Bus Sends</SendsTitle>
          {[...Array(16)].map((_, i) => (
            <SendRow key={i}>
              <SendNo>{i + 1}</SendNo>
              {i < 8 ? <SendTap aria-label={`Send ${i + 1}`} /> : <SendBar $pan={i === 9} />}
            </SendRow>
          ))}
        </Sends>
      </Panel>
      <Cards>
        <Card />
        <Card />
        <Card>
          <CardTop>
            <Knob angle={145} to={145} label="Insert position" />
            <CardText>Insert<Value defaultValue="POST" /></CardText>
          </CardTop>
          <FlatButton $wide>Insert</FlatButton>
        </Card>
        <Card>
          <CardTop>
            <Knob angle={145} to={145} label="Dynamics position" />
            <CardText>Dynamics<Value defaultValue="POST" /></CardText>
          </CardTop>
          <FlatButton $wide $on>EQ</FlatButton>
        </Card>
        <Card />
        <Card>
          <CardTop>
            <Knob angle={-145} label="Fader" />
            <CardText>Fader<WithUnit><Value defaultValue="-oo" />dB</WithUnit></CardText>
          </CardTop>
          <FlatButton $wide>Mute</FlatButton>
        </Card>
      </Cards>
    </Screen>
  );
};

const SidePanel = () => {
  const [view, setView] = useState('HOME');
  return (
    <Side>
      <SideTop>
        <Nav>
          {views.map((v) => (
            <NavButton key={v} $on={v === view} onClick={() => setView(v)}>{v}</NavButton>
          ))}
        </Nav>
        <RightCol>
          <MeterBox>
            <MainMeter />
            <DbScale>
              {['CLIP', -2, -4, -8, -12, -18, -24, -30, -36, -42, -48, -57].map((v) => <p key={v}>{v}</p>)}
            </DbScale>
            <MainMeter />
            <MainMeter />
            <MeterLabel>M/C</MeterLabel>
            <span />
            <MeterLabel>L</MeterLabel>
            <MeterLabel>R</MeterLabel>
          </MeterBox>
          <Box $pad="3px 0">
            <BoxTitle>MUTE GROUPS</BoxTitle>
            <MuteGrid>
              {[1, 2, 3, 4, 5, 6].map((n) => <Key key={n}>{n}</Key>)}
            </MuteGrid>
          </Box>
        </RightCol>
      </SideTop>
      <Box $pad="0 0 1px">
        <BoxTitle>SCENES (X32-Edit)</BoxTitle>
        <SceneKeys>
          <Key $w={26} $h={22}>&lt;</Key>
          <Key $w={26} $h={22}>&gt;</Key>
          <Key $w={39} $h={22}>UNDO</Key>
          <Key $w={28} $h={25} $look="red">GO</Key>
          <Key $w={34} $h={22}>VIEW</Key>
        </SceneKeys>
      </Box>
      <Assign>
        <BoxTitle>ASSIGN</BoxTitle>
        <AssignGrid>
          {[['Fx3:\nFeedL', 88], ['Fx3:\nFeedR', 88], ['Fx3:\nMix', 145], ['Fx3:\nTime', -80]].map(([name, angle]) => (
            <AssignCell key={name}>
              <Knob size={38} angle={angle} to={angle} label={name} />
              <FxName>{name}</FxName>
            </AssignCell>
          ))}
          <Key $w={36} $size={9} $lh={10}><span>Fx3L:</span><span>Mute</span></Key>
          <Key $w={36} $size={9} $lh={10}><span>Fx3R:</span><span>Mute</span></Key>
          <Key $w={36} $size={9} $lh={10}>FX FX3</Key>
          <Key $w={36} $size={9} $lh={10}><span>Fx3:</span><span>Time</span></Key>
          {[5, 6, 7, 8].map((n) => <Key key={n} $w={36} aria-label={`Assign ${n}`} />)}
        </AssignGrid>
        <SetRow>
          <span>SET</span>
          <Key $w={29} $h={22} $look="amber">A</Key>
          <Key $w={29} $h={22}>B</Key>
          <Key $w={29} $h={22}>C</Key>
          <Key $w={34} $h={22}>VIEW</Key>
        </SetRow>
      </Assign>
    </Side>
  );
};

const App = () => (
  <>
    <GlobalStyle />
    <Desktop>
      <Window>
        <TitleBar>
          <TitleSide />
          <Logo />
          <AppName>EDIT</AppName>
          <Title>[Device: (Not Connected)]</Title>
          <TitleSide>
            <WinButton color="#a08c28" d="M4.500 4H12.500" />
            <WinButton color="#3fa03f" d="M4.500 4H12.500M8.500 0V8" />
            <WinButton color="#c05050" d="M5.500 1L11.500 7M11.500 1L5.500 7" />
          </TitleSide>
        </TitleBar>
        <Main>
          <ConsoleScreen />
          <SidePanel />
        </Main>
        <Mixer>
          <Bank>
            <BankKey top="SELECT" bottom="SOLO" sizes={[9, 11]} />
            <Spacer $h={21} />
            <BankKey top="CH" bottom="1-16" look="green" />
            <BankKey top="CH" bottom="17-32" />
            <BankKey top="AUX IN" bottom="FX Rtn" sizes={[9, 9]} />
            <BankKey top="BUS" bottom="MASTER" sizes={[11, 8]} />
            <Spacer $h={31} />
            <BankKey top="FINE" h={24} />
          </Bank>
          <Strips $n={16}>
            {channels.map((c, i) => (
              <Channel key={i} data={c} title={`Ch${String(i + 1).padStart(2, '0')}`} index={i + 1} dark={i % 2 === 1} selected={i === 0} />
            ))}
          </Strips>
          <Bank>
            <BankKey top="SENDS" bottom="ON FDR" sizes={[9, 9]} />
            <Spacer $h={21} />
            <BankKey top="GROUP" bottom="DCA 1-8" sizes={[9, 8]} look="green" />
            <BankKey top="BUS" bottom="1-8" />
            <BankKey top="BUS" bottom="9-16" />
            <BankKey top="MTX1-6" bottom="MAIN C" sizes={[9, 9]} />
            <Spacer $h={5} />
            <BankKey top="TALK A" sizes={[9]} h={24} />
            <BankKey top="TALK B" sizes={[9]} h={24} />
          </Bank>
          <Strips $n={8}>
            {dcas.map((c, i) => (
              <Channel key={i} data={c} title={`DCA${i + 1}`} index={i + 1} dark={i % 2 === 1} />
            ))}
          </Strips>
          <div />
          <Channel data={['', 'speakers', 'white', 0]} title="LR" index="LR" dark main />
        </Mixer>
        <Footer>
          <span>Hutton Aid</span>
          <span>Remote</span>
          <span>PL&amp;Y</span>
        </Footer>
      </Window>
      <Edge />
    </Desktop>
  </>
);

export default App;
